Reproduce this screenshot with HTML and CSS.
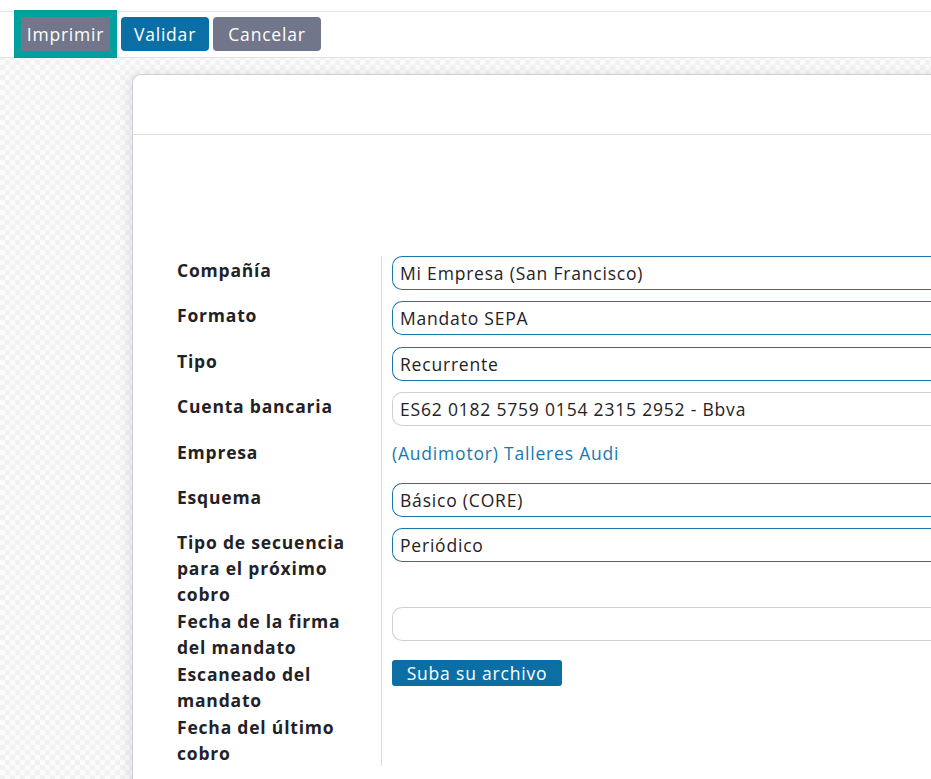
FILE: index.html
```html
<!DOCTYPE html>
<html lang="es">
<head>
<meta charset="utf-8">
<title>Mandato</title>
<link rel="stylesheet" href="styles.css">
</head>
<body>
<div class="topstrip"></div>
<div class="toolbar">
  <button class="btn btn-secondary btn-focus">Imprimir</button>
  <button class="btn btn-primary">Validar</button>
  <button class="btn btn-secondary">Cancelar</button>
</div>
<main class="sheet-area">
  <section class="card">
    <div class="card-header"></div>
    <div class="card-body">
      <div class="form-grid">
        <div class="label">Compañía</div>
        <div class="field"><div class="input active">Mi Empresa (San Francisco)</div></div>

        <div class="label">Formato</div>
        <div class="field"><div class="input active">Mandato SEPA</div></div>

        <div class="label">Tipo</div>
        <div class="field"><div class="input active">Recurrente</div></div>

        <div class="label">Cuenta bancaria</div>
        <div class="field"><div class="input">ES62 0182 5759 0154 2315 2952 - Bbva</div></div>

        <div class="label">Empresa</div>
        <div class="field"><a class="link" href="#">(Audimotor) Talleres Audi</a></div>

        <div class="label">Esquema</div>
        <div class="field"><div class="input active">Básico (CORE)</div></div>

        <div class="label">Tipo de secuencia para el próximo cobro</div>
        <div class="field"><div class="input active">Periódico</div></div>

        <div class="label">Fecha de la firma del mandato</div>
        <div class="field"><div class="input"></div></div>

        <div class="label">Escaneado del mandato</div>
        <div class="field"><button class="upload">Suba su archivo</button></div>

        <div class="label">Fecha del último cobro</div>
        <div class="field"></div>
      </div>
    </div>
  </section>
</main>
</body>
</html>
```

FILE: styles.css
```css
* { box-sizing: border-box; }

html, body {
  margin: 0;
  padding: 0;
  overflow: hidden;
}

body {
  font-family: "Open Sans", "Liberation Sans", sans-serif;
  color: #1f2226;
  background-color: #f6f6f6;
  background-image: repeating-conic-gradient(#f2f2f2 0% 25%, #fbfbfb 0% 50%);
  background-size: 10px 10px;
  min-height: 779px;
}

.topstrip {
  height: 12px;
  background: #fff;
  border-bottom: 1px solid #e4e4e8;
}

.toolbar {
  background: #fff;
  height: 46px;
  padding: 5px 0 0 21px;
  display: flex;
  align-items: flex-start;
  gap: 4px;
  border-bottom: 1px solid #e2e2e6;
}

.btn {
  font-family: inherit;
  font-size: 17.5px;
  letter-spacing: 0.8px;
  color: #fff;
  border: none;
  height: 34px;
  padding: 0;
  border-radius: 4px;
  cursor: pointer;
}

.btn-secondary { background: #71768b; }
.btn-primary { background: #0b6fa6; width: 88px; }
.btn-secondary:last-child { width: 108px; }

.btn-focus {
  border-radius: 0;
  width: 89px;
  outline: 7px solid #00a09d;
  margin-right: 7px;
}

.sheet-area {
  padding: 16px 0 0 132px;
}

.card {
  width: 900px;
  background: #fff;
  border: 1px solid #cfcdd9;
  border-right: none;
  border-radius: 9px 0 0 0;
  box-shadow: -3px 0 12px rgba(0, 0, 0, 0.09);
  min-height: 720px;
}

.card-header {
  height: 60px;
  border-bottom: 1px solid #dfdee4;
}

.card-body {
  padding: 121px 0 0 44px;
}

.form-grid {
  display: grid;
  grid-template-columns: 205px 1fr;
}

.label {
  font-weight: 700;
  font-size: 17.5px;
  letter-spacing: 0.8px;
  line-height: 26px;
  padding: 1px 20px 0 0;
  border-right: 1px solid #dcdcdc;
  color: #1f2226;
}

.field {
  padding-left: 10px;
  min-height: 45.4px;
}

.input {
  height: 34px;
  border: 1px solid #cfcfcf;
  border-radius: 10px 0 0 10px;
  border-right: none;
  padding: 0 7px;
  font-size: 17.5px;
  letter-spacing: 0.8px;
  line-height: 32px;
  color: #1f2226;
  white-space: nowrap;
}

.input.active {
  border-color: #1a78ad;
}

.link {
  display: inline-block;
  padding-top: 2px;
  font-size: 17.5px;
  letter-spacing: 0.8px;
  line-height: 26px;
  color: #1779b1;
  text-decoration: none;
}

.upload {
  font-family: inherit;
  font-size: 17.5px;
  letter-spacing: 0.8px;
  color: #fff;
  background: #0b6fa6;
  border: none;
  border-radius: 3px;
  height: 26px;
  width: 170px;
  padding: 0;
  line-height: 26px;
}
```
